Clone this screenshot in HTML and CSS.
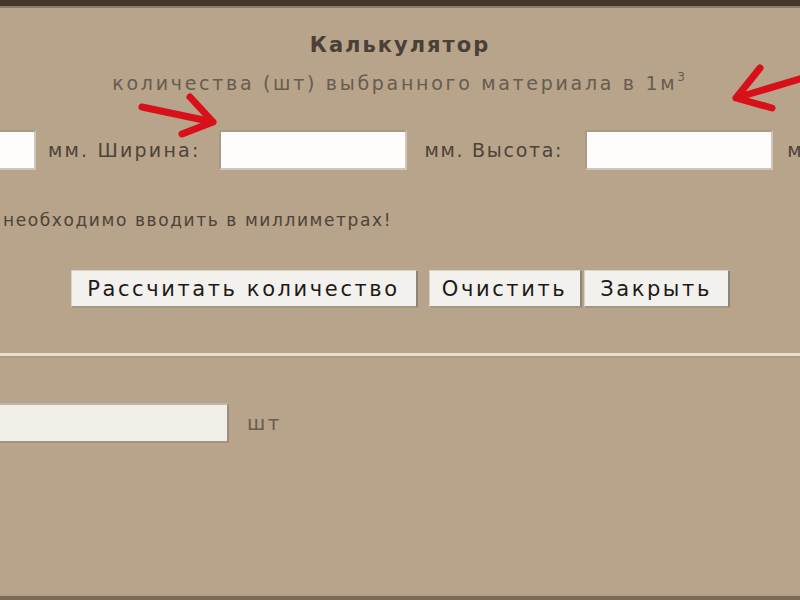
FILE: index.html
```html
<!DOCTYPE html>
<html lang="ru">
<head>
<meta charset="utf-8">
<title>Калькулятор</title>
<link rel="stylesheet" href="styles.css">
</head>
<body>
<div class="page">
  <div class="topbar"></div>
  <div class="content">
    <h1 class="title">Калькулятор</h1>
    <p class="subtitle">количества (шт) выбранного материала в 1м<sup>3</sup></p>
    <div class="dims">
      <input class="field field-stub" type="text">
      <span class="label label-w">мм. Ширина:</span>
      <input class="field field-dim" type="text">
      <span class="label label-h">мм. Высота:</span>
      <input class="field field-dim" type="text">
      <span class="label label-end">мм.</span>
    </div>
    <p class="note">необходимо вводить в миллиметрах!</p>
    <div class="buttons">
      <button class="btn btn-calc" type="button">Рассчитать количество</button>
      <button class="btn btn-clear" type="button">Очистить</button>
      <button class="btn btn-close" type="button">Закрыть</button>
    </div>
    <div class="divider"></div>
    <div class="result">
      <input class="field field-result" type="text">
      <span class="unit">шт</span>
    </div>
  </div>
  <div class="bottombar"></div>

  <svg class="arrow arrow-right" width="100" height="60" viewBox="0 0 100 60">
    <path d="M10 17 L81 32 M58 7 L81 32 L50 44" fill="none" stroke="#d8101a" stroke-width="7" stroke-linecap="round" stroke-linejoin="round"/>
  </svg>
  <svg class="arrow arrow-left" width="90" height="70" viewBox="0 0 90 70">
    <path d="M92 26 L18 48 M42 18 L18 48 L54 58" fill="none" stroke="#d8101a" stroke-width="7" stroke-linecap="round" stroke-linejoin="round"/>
  </svg>
</div>
</body>
</html>
```

FILE: styles.css
```css
html, body {
  margin: 0;
  padding: 0;
}

body {
  background: #b7a48a;
  font-family: "DejaVu Sans", Verdana, sans-serif;
  color: #4d4338;
  overflow: hidden;
}

.page {
  position: relative;
  width: 800px;
  height: 600px;
  display: flex;
  flex-direction: column;
  overflow: hidden;
}

.topbar {
  height: 6px;
  background: #43372b;
  border-bottom: 2px solid #8d7c68;
}

.content {
  flex: 1;
  display: flex;
  flex-direction: column;
}

.title {
  margin: 25px 0 0;
  font-size: 21px;
  line-height: 24px;
  font-weight: bold;
  letter-spacing: 2px;
  text-align: center;
  color: #4a4037;
}

.subtitle {
  margin: 14px 0 0;
  font-size: 19px;
  line-height: 24px;
  letter-spacing: 2.7px;
  text-align: center;
  color: #675c51;
}

.subtitle sup {
  font-size: 12px;
  line-height: 0;
  vertical-align: 9px;
}

.dims {
  margin-top: 35px;
  display: flex;
  align-items: center;
  white-space: nowrap;
}

.field {
  box-sizing: border-box;
  height: 40px;
  margin: 0;
  padding: 0;
  background: #fefdfb;
  border: 2px solid #cfc6ba;
  border-top-color: #a89a88;
  border-left-color: #a89a88;
  font: inherit;
}

.field-stub {
  width: 36px;
  border-left: none;
}

.field-dim {
  width: 188px;
}

.label {
  font-size: 19px;
  letter-spacing: 2.2px;
  color: #4d4338;
}

.label-w {
  margin: 0 18px 0 12px;
}

.label-h {
  margin: 0 22px 0 18px;
  letter-spacing: 1.7px;
}

.label-end {
  margin-left: 14px;
}

.note {
  margin: 38px 0 0;
  padding-left: 3px;
  font-size: 17px;
  line-height: 24px;
  letter-spacing: 1.6px;
  color: #4d4338;
  white-space: nowrap;
}

.buttons {
  margin-top: 38px;
  display: flex;
  justify-content: center;
  align-items: center;
}

.btn {
  box-sizing: border-box;
  height: 38px;
  margin: 0;
  padding: 0;
  background: #f3f1ed;
  border: 1px solid #d8d2c8;
  border-right: 2px solid #8e8475;
  border-bottom: 2px solid #a29785;
  font-family: "DejaVu Sans", Verdana, sans-serif;
  font-size: 21px;
  letter-spacing: 2.6px;
  color: #1e1a16;
}

.btn-calc {
  width: 347px;
}

.btn-clear {
  width: 153px;
  margin-left: 11px;
}

.btn-close {
  width: 146px;
  margin-left: 2px;
}

.divider {
  margin-top: 45px;
  height: 3px;
  background: #ecdcc6;
  border-bottom: 2px solid #a99a86;
}

.result {
  margin-top: 45px;
  display: flex;
  align-items: center;
}

.field-result {
  width: 229px;
  background: #f2efe9;
  border-left: none;
  border-top-color: #c2b6a6;
  border-right-color: #9a8e7e;
  border-bottom-color: #9f9383;
}

.unit {
  margin-left: 18px;
  font-size: 20px;
  letter-spacing: 2.5px;
  color: #6a5d50;
}

.bottombar {
  height: 4px;
  background: #7b6a57;
  border-top: 2px solid #b0a08c;
}

.arrow {
  position: absolute;
}

.arrow-right {
  left: 132px;
  top: 90px;
}

.arrow-left {
  left: 718px;
  top: 50px;
}
```
